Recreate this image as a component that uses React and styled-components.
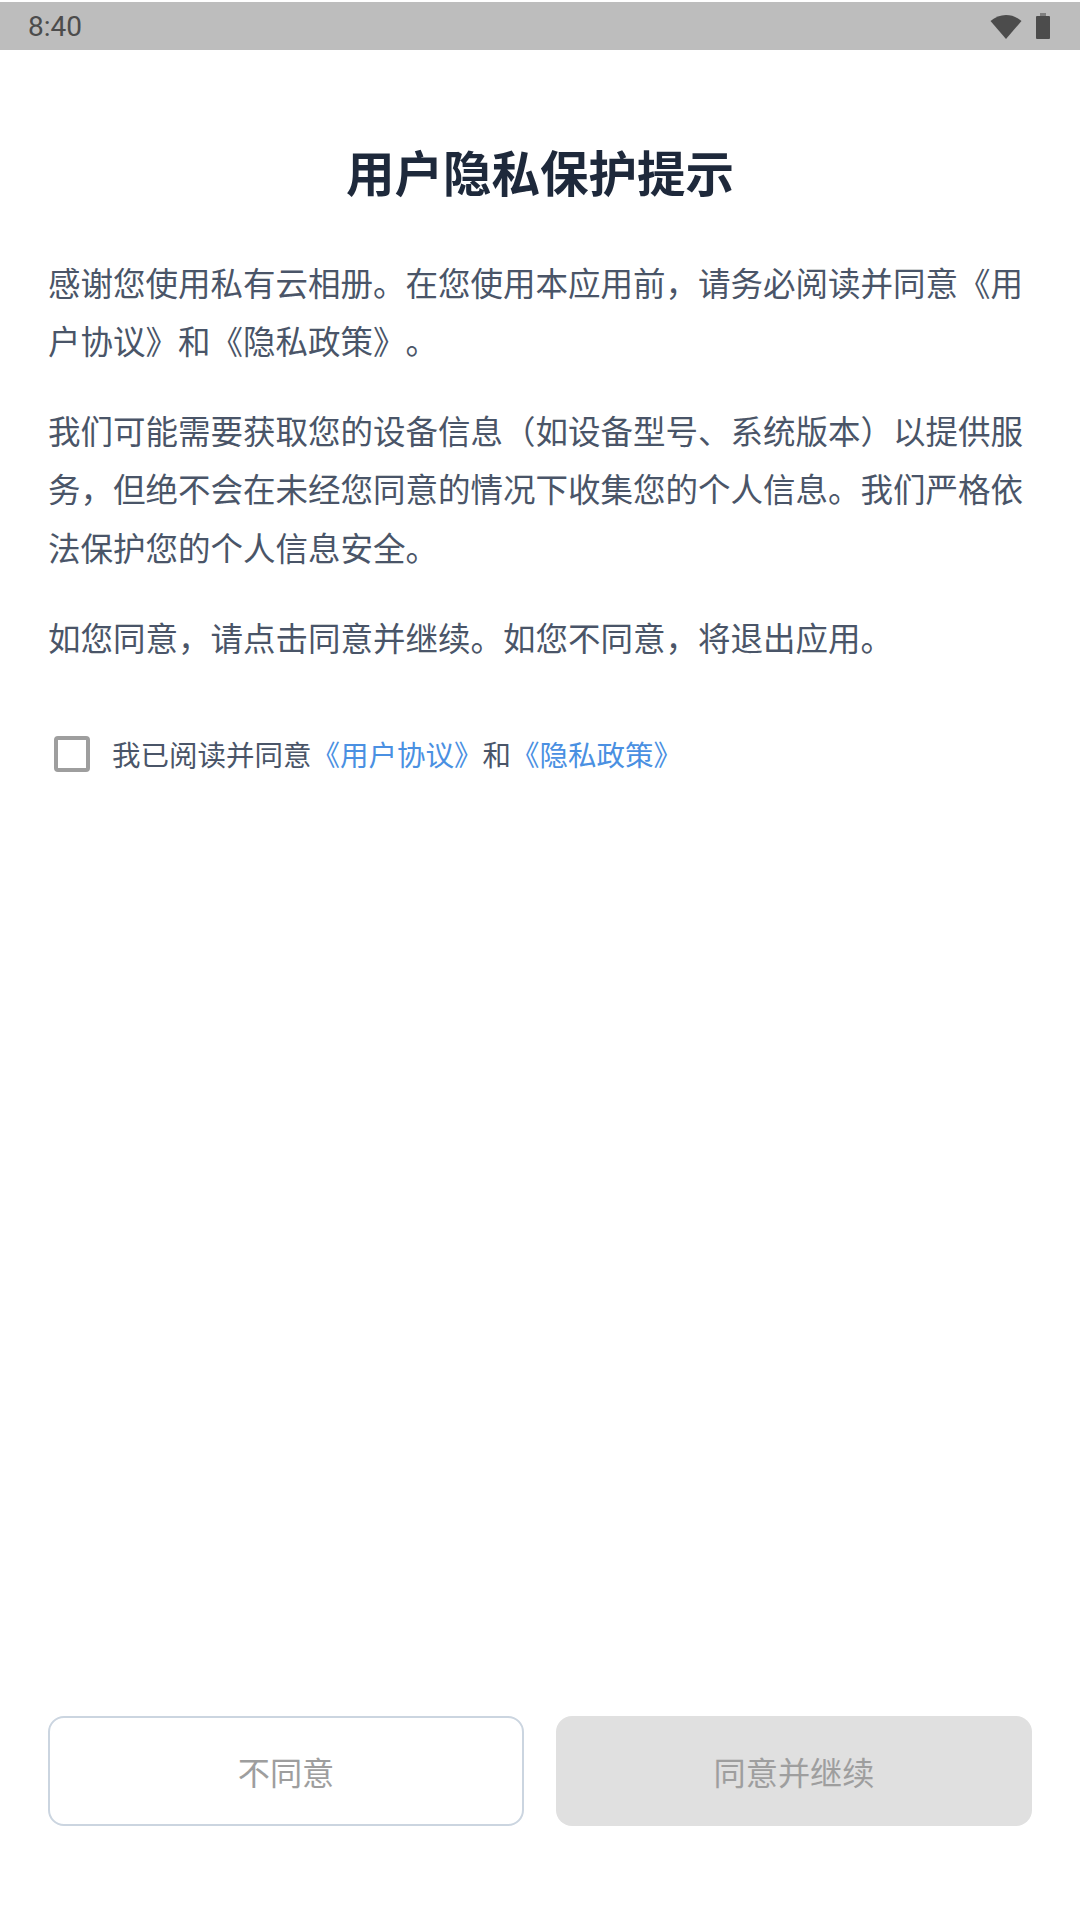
import React from 'react';
import styled, {createGlobalStyle} from 'styled-components';

const GlobalStyle = createGlobalStyle`
  html, body {
    margin: 0;
    padding: 0;
    background: #fff;
  }

  body {
    font-family: "Noto Sans CJK SC", "Noto Sans", sans-serif;
    text-spacing-trim: space-all;
  }
`;

const Screen = styled.div`
  width: 1080px;
  height: 1920px;
  display: flex;
  flex-direction: column;
  background: #fff;
  overflow: hidden;
`;

const StatusBar = styled.div`
  height: 48px;
  margin-top: 2px;
  flex: none;
  display: flex;
  align-items: center;
  justify-content: space-between;
  padding: 0 30px 0 28px;
  background: #bdbdbd;
  color: #4c4c4c;
  font-family: Roboto, sans-serif;
  font-size: 28px;
`;

const StatusIcons = styled.div`
  display: flex;
  align-items: center;
  gap: 14px;
`;

const Content = styled.main`
  flex: 1;
  display: flex;
  flex-direction: column;
  padding: 0 48px;
`;

const Title = styled.h1`
  margin: 89px 0 0;
  text-align: center;
  font-size: 48.5px;
  line-height: 64px;
  font-weight: 700;
  color: #1e293b;
`;

const Paragraph = styled.p`
  margin: 0;
  margin-top: ${props => props.$top}px;
  font-size: 32.5px;
  line-height: 58.4px;
  color: #4a5568;
`;

const ConsentRow = styled.label`
  display: flex;
  align-items: center;
  margin-top: 64px;
  padding-left: 6px;
  font-size: 28.5px;
  line-height: 48px;
  color: #4a5568;
`;

const CheckBox = styled.span`
  width: 36px;
  height: 36px;
  flex: none;
  box-sizing: border-box;
  margin-right: 22px;
  border: 4px solid #9e9e9e;
  border-radius: 4px;
`;

const DocLink = styled.span`
  color: #4a90e2;
`;

const ButtonRow = styled.div`
  margin-top: auto;
  margin-bottom: 94px;
  display: grid;
  grid-template-columns: 1fr 1fr;
  gap: 32px;
`;

const Button = styled.button`
  height: 110px;
  padding: 0;
  box-sizing: border-box;
  border-radius: 16px;
  border: ${props => (props.$outline ? '2px solid #cbd5e0' : 'none')};
  background: ${props => (props.$outline ? '#fff' : '#e0e0e0')};
  color: #9e9e9e;
  font-family: inherit;
  font-size: 32.2px;
`;

function WifiIcon() {
    return (
        <svg width="32" height="25" viewBox="0 0 32 25">
            <path d="M0.5 7 C5 3 10.500 1 16 1 C21.500 1 27 3 31.500 7 L16 25 Z" fill="#4c4c4c"/>
        </svg>
    );
}

function BatteryIcon() {
    return (
        <svg width="14" height="26" viewBox="0 0 14 26">
            <rect x="4" y="0" width="6" height="4" fill="#808080"/>
            <rect x="0" y="3" width="14" height="23" rx="1" fill="#4c4c4c"/>
        </svg>
    );
}

export default function App() {
    return (
        <Screen>
            <GlobalStyle/>
            <StatusBar>
                <span>8:40</span>
                <StatusIcons>
                    <WifiIcon/>
                    <BatteryIcon/>
                </StatusIcons>
            </StatusBar>
            <Content>
                <Title>用户隐私保护提示</Title>
                <Paragraph $top={50}>感谢您使用私有云相册。在您使用本应用前，请务必阅读并同意《用户协议》和《隐私政策》。</Paragraph>
                <Paragraph $top={31}>我们可能需要获取您的设备信息（如设备型号、系统版本）以提供服务，但绝不会在未经您同意的情况下收集您的个人信息。我们严格依法保护您的个人信息安全。</Paragraph>
                <Paragraph $top={32}>如您同意，请点击同意并继续。如您不同意，将退出应用。</Paragraph>
                <ConsentRow>
                    <CheckBox/>
                    <span>我已阅读并同意<DocLink>《用户协议》</DocLink>和<DocLink>《隐私政策》</DocLink></span>
                </ConsentRow>
                <ButtonRow>
                    <Button $outline>不同意</Button>
                    <Button>同意并继续</Button>
                </ButtonRow>
            </Content>
        </Screen>
    );
}
